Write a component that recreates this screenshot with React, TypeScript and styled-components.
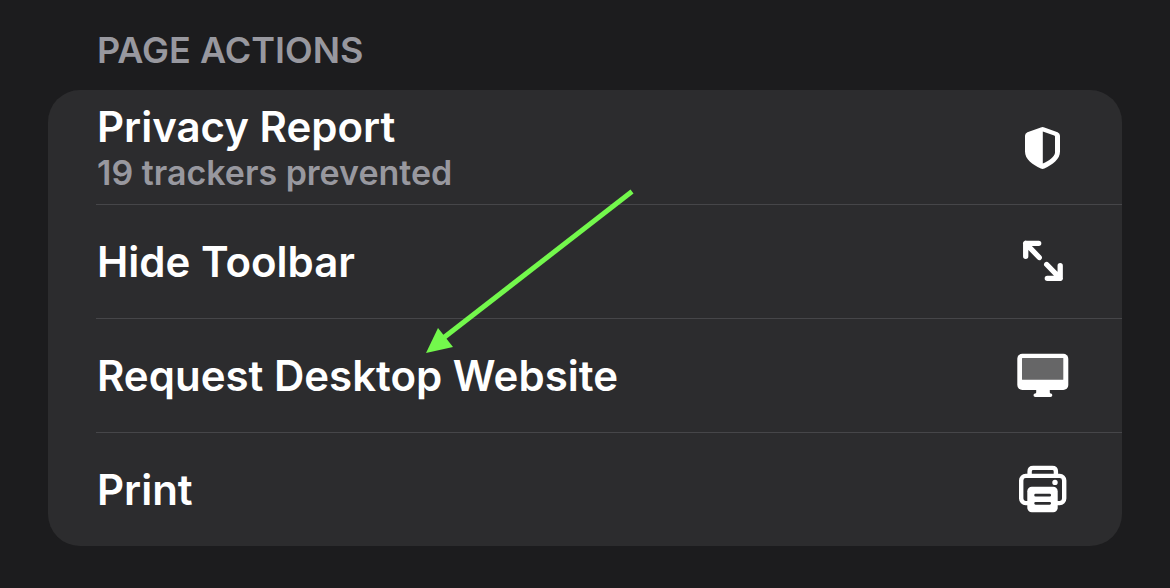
import React from "react";
import styled, { createGlobalStyle } from "styled-components";

const GlobalStyle = createGlobalStyle`
  * { box-sizing: border-box; }
  body {
    margin: 0;
    background: #1c1c1e;
    font-family: Inter, "Liberation Sans", sans-serif;
  }
`;

const Page = styled.main`
  padding: 28px 48px 40px;
`;

const SectionTitle = styled.h2`
  margin: 0 0 18px;
  padding: 0 49px;
  color: #98989f;
  font-size: 36px;
  font-weight: 600;
  line-height: 44px;
  text-transform: uppercase;
`;

const Card = styled.section`
  position: relative;
  border-radius: 32px;
  background: #2c2c2e;
`;

const ActionList = styled.ul`
  margin: 0;
  padding: 0 0 0 48px;
  list-style: none;
`;

const ActionItem = styled.li`
  display: flex;
  min-height: 114px;

  & + & {
    border-top: 1px solid #464649;
  }
`;

const ActionButton = styled.button`
  display: flex;
  flex: 1;
  align-items: center;
  justify-content: space-between;
  padding: 0 53px 0 1px;
  border: 0;
  background: none;
  color: #fff;
  font-family: inherit;
  text-align: left;
  cursor: pointer;
`;

const Labels = styled.span`
  display: flex;
  flex-direction: column;
  gap: 4px;
`;

const Label = styled.span`
  font-size: 42px;
  font-weight: 600;
  line-height: 48px;
`;

const Detail = styled.span`
  color: #98989f;
  font-size: 34px;
  font-weight: 600;
  line-height: 36px;
`;

const Icon = styled.svg`
  flex: none;
  width: 52px;
  height: 52px;
  margin-bottom: 1px;
  color: #fff;
`;

const Pointer = styled.svg`
  position: absolute;
  top: 98px;
  left: 376px;
  width: 212px;
  height: 168px;
  pointer-events: none;
`;

const ShieldIcon = () => (
  <Icon viewBox="0 0 52 52" aria-hidden="true">
    <path
      fill="currentColor"
      fillRule="evenodd"
      d="M23.8 6.5Q25.6 5.7 27.4 6.5L40.6 11.2Q43 12.2 43 14.8V30.5C43 38.5 35.5 43.5 27.4 47.5Q25.6 48.4 23.8 47.5C15.5 43.5 8 38.5 8 30.5V14.8Q8 12.2 10.4 11.2ZM25.8 10.6V42.6C32 39.6 38 35.8 38 31.5V15.6Q38 14.8 37.2 14.5Z"
    />
  </Icon>
);

const ExpandIcon = () => (
  <Icon viewBox="0 0 52 52" aria-hidden="true">
    <path
      fill="none"
      stroke="currentColor"
      strokeWidth="5.3"
      strokeLinecap="round"
      strokeLinejoin="round"
      d="M21.7 8.3H8.7V21.3M8.7 8.3L22.3 22.5M29.7 29.5L43.2 43.3M43.2 30.7V43.3H30.3"
    />
  </Icon>
);

const DesktopIcon = () => (
  <Icon viewBox="0 0 52 52" aria-hidden="true">
    <rect x="0.3" y="4.7" width="51" height="36.3" rx="5" fill="currentColor" />
    <rect x="5" y="9" width="41.3" height="21.7" rx="0.5" fill="#666667" />
    <path
      fill="currentColor"
      d="M19.2 40H32.8V43.5Q32.8 44.4 34 44.5Q35.3 44.8 35.3 46.2Q35.3 48 33.5 48H18.3Q16.5 48 16.5 46.2Q16.5 44.8 18 44.5Q19.2 44.4 19.2 43.5Z"
    />
  </Icon>
);

const PrinterIcon = () => (
  <Icon viewBox="0 0 52 52" aria-hidden="true">
    <g fill="none" stroke="currentColor" strokeWidth="4.4">
      <path d="M12.6 12V8.5Q12.6 4.9 16.2 4.9H35.3Q38.9 4.9 38.9 8.5V12" />
      <rect x="4.2" y="12.9" width="43" height="27.2" rx="4.5" />
    </g>
    <circle cx="38" cy="19.4" r="2.7" fill="currentColor" />
    <rect x="10.3" y="23.7" width="30.4" height="25.6" rx="4.5" fill="currentColor" />
    <path
      d="M18.6 32.2H32.7M18.6 40.3H32.7"
      stroke="#2c2c2e"
      strokeWidth="2.7"
      strokeLinecap="round"
    />
  </Icon>
);

interface Action {
  label: string;
  detail?: string;
  Glyph: React.ComponentType;
}

const actions: Action[] = [
  { label: "Privacy Report", detail: "19 trackers prevented", Glyph: ShieldIcon },
  { label: "Hide Toolbar", Glyph: ExpandIcon },
  { label: "Request Desktop Website", Glyph: DesktopIcon },
  { label: "Print", Glyph: PrinterIcon },
];

export default function App() {
  return (
    <>
      <GlobalStyle />
      <Page>
        <SectionTitle id="page-actions">Page Actions</SectionTitle>
        <Card aria-labelledby="page-actions">
          <ActionList>
            {actions.map(({ label, detail, Glyph }) => (
              <ActionItem key={label}>
                <ActionButton type="button">
                  <Labels>
                    <Label>{label}</Label>
                    {detail && <Detail>{detail}</Detail>}
                  </Labels>
                  <Glyph />
                </ActionButton>
              </ActionItem>
            ))}
          </ActionList>
          <Pointer viewBox="0 0 212 168" aria-hidden="true">
            <path d="M208 3.5L18 151" stroke="#73f84c" strokeWidth="5" />
            <path d="M2 165L14 140L29 159Z" fill="#73f84c" />
          </Pointer>
        </Card>
      </Page>
    </>
  );
}
